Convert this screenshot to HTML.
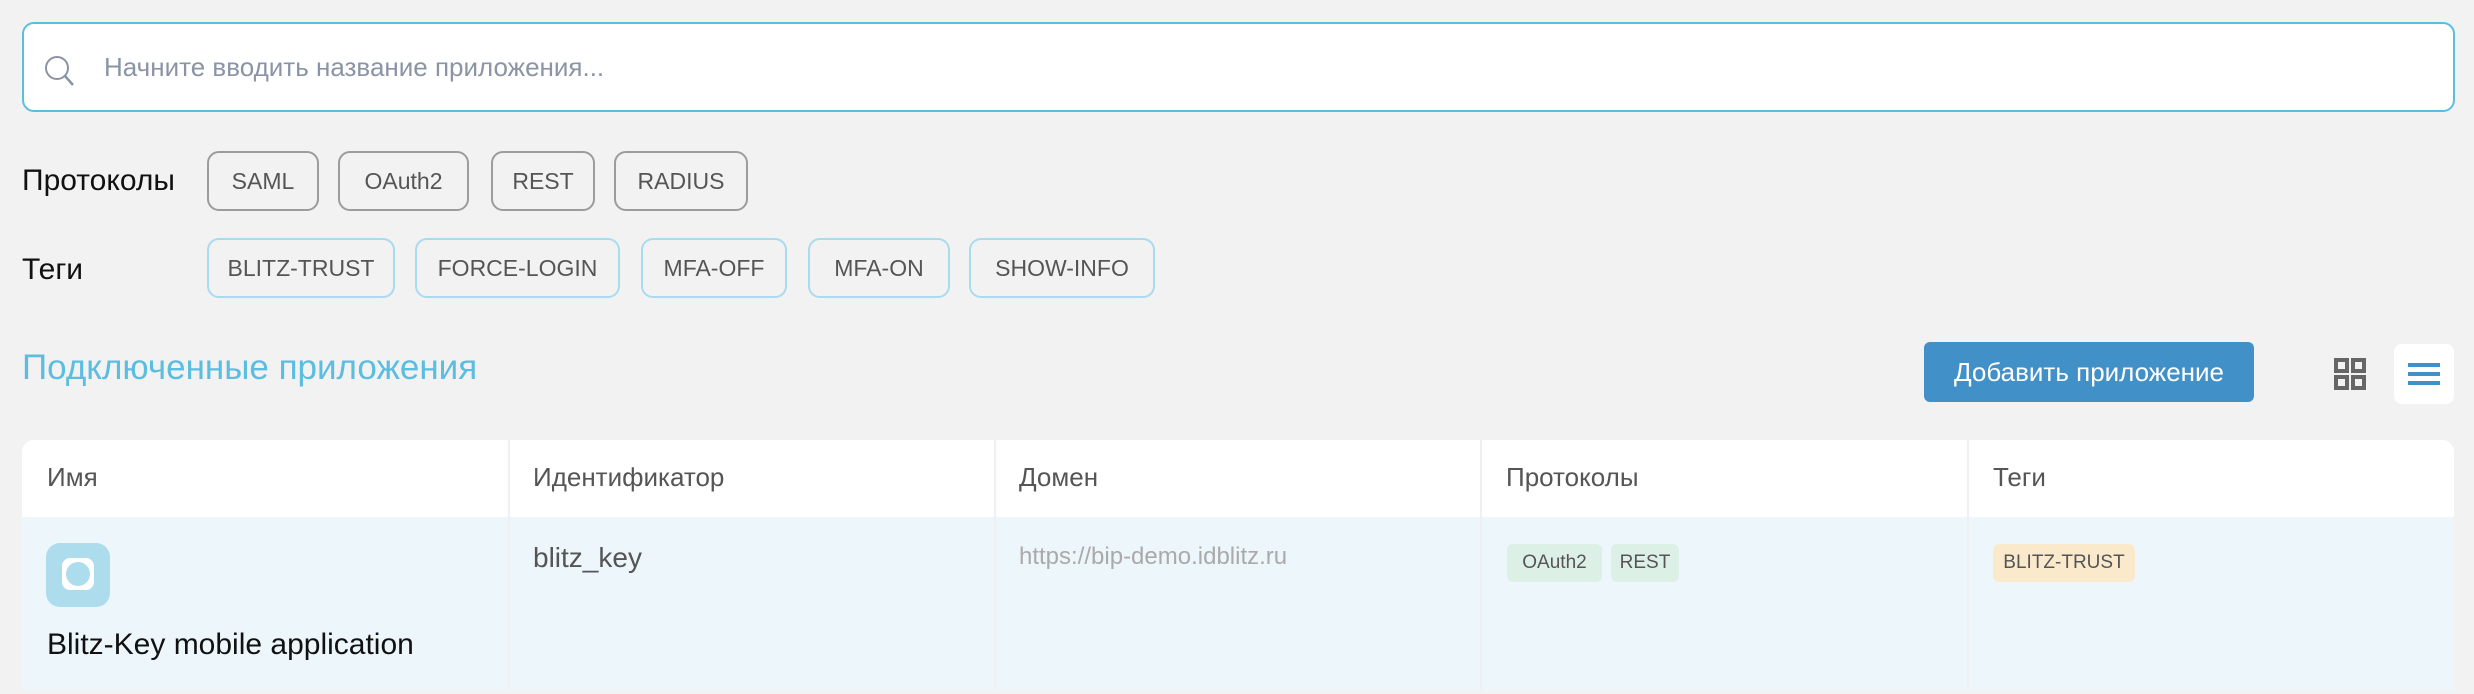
<!DOCTYPE html>
<html><head><meta charset="utf-8"><style>
*{box-sizing:border-box;margin:0;padding:0}
body{width:2474px;height:694px;background:#f2f2f2;font-family:"Liberation Sans",sans-serif;position:relative;overflow:hidden}
.a{position:absolute}
.search{left:22px;top:22px;width:2433px;height:90px;background:#fff;border:2px solid #5bbde0;border-radius:12px}
.ph{left:104px;top:50px;font-size:26px;color:#8a94a6;line-height:34px}
.lbl{font-size:30px;color:#111;line-height:34px}
.chip{height:60px;border:2px solid #9c9c9c;border-radius:12px;font-size:23px;color:#555;display:flex;align-items:center;justify-content:center}
.tag{border-color:#a9dbee}
.h{left:22px;top:348px;font-size:35px;color:#5bbde0;line-height:40px}
.btn{left:1924px;top:342px;width:330px;height:60px;background:#4290c8;border-radius:6px;color:#fff;font-size:26px;display:flex;align-items:center;justify-content:center}
.tbl{left:22px;top:440px;width:2432px;height:250px;background:#fff;border-radius:12px 12px 0 0;overflow:hidden}
.row{left:0;top:77px;width:2432px;height:173px;background:#edf6fb}
.vl{top:0;width:2px;height:250px;background:#eef0f2}
.th{top:461px;font-size:26px;color:#555;line-height:32px}
.pill{height:38px;border-radius:6px;font-size:19px;color:#555;display:flex;align-items:center;justify-content:center}
</style></head><body>
<div class="a search"></div>
<svg class="a" style="left:42px;top:53px" width="36" height="36" viewBox="0 0 36 36"><circle cx="15" cy="15" r="11" fill="none" stroke="#8a94a6" stroke-width="2"/><line x1="23" y1="23" x2="31" y2="32" stroke="#8a94a6" stroke-width="2.5"/></svg>
<div class="a ph">Начните вводить название приложения...</div>

<div class="a lbl" style="left:22px;top:164px">Протоколы</div>
<div class="a chip" style="left:207px;top:151px;width:112px">SAML</div>
<div class="a chip" style="left:338px;top:151px;width:131px">OAuth2</div>
<div class="a chip" style="left:491px;top:151px;width:104px">REST</div>
<div class="a chip" style="left:614px;top:151px;width:134px">RADIUS</div>

<div class="a lbl" style="left:22px;top:253px">Теги</div>
<div class="a chip tag" style="left:207px;top:238px;width:188px">BLITZ-TRUST</div>
<div class="a chip tag" style="left:415px;top:238px;width:205px">FORCE-LOGIN</div>
<div class="a chip tag" style="left:641px;top:238px;width:146px">MFA-OFF</div>
<div class="a chip tag" style="left:808px;top:238px;width:142px">MFA-ON</div>
<div class="a chip tag" style="left:969px;top:238px;width:186px">SHOW-INFO</div>

<div class="a h">Подключенные приложения</div>
<div class="a btn">Добавить приложение</div>
<svg class="a" style="left:2334px;top:358px" width="32" height="32" viewBox="0 0 32 32" fill="none" stroke="#666" stroke-width="4"><rect x="2" y="2" width="11" height="11"/><rect x="19" y="2" width="11" height="11"/><rect x="2" y="19" width="11" height="11"/><rect x="19" y="19" width="11" height="11"/></svg>
<div class="a" style="left:2394px;top:344px;width:60px;height:60px;background:#fff;border-radius:8px"></div>
<div class="a" style="left:2408px;top:363px;width:32px;height:4px;background:#4290c8"></div>
<div class="a" style="left:2408px;top:372px;width:32px;height:4px;background:#4290c8"></div>
<div class="a" style="left:2408px;top:381px;width:32px;height:4px;background:#4290c8"></div>

<div class="a tbl">
<div class="a row"></div>
<div class="a vl" style="left:486px"></div>
<div class="a vl" style="left:972px"></div>
<div class="a vl" style="left:1458px"></div>
<div class="a vl" style="left:1945px"></div>
</div>
<div class="a th" style="left:47px">Имя</div>
<div class="a th" style="left:533px">Идентификатор</div>
<div class="a th" style="left:1019px">Домен</div>
<div class="a th" style="left:1506px">Протоколы</div>
<div class="a th" style="left:1993px">Теги</div>

<div class="a" style="left:46px;top:543px;width:64px;height:64px;background:#addcec;border-radius:14px"></div>
<div class="a" style="left:62px;top:558px;width:32px;height:32px;background:#fff;border-radius:8px"></div>
<div class="a" style="left:66px;top:562px;width:24px;height:24px;background:#addcec;border-radius:50%"></div>
<div class="a" style="left:47px;top:628px;font-size:30px;color:#111;font-weight:500">Blitz-Key mobile application</div>
<div class="a" style="left:533px;top:542px;font-size:28px;color:#555">blitz_key</div>
<div class="a" style="left:1019px;top:543px;font-size:24px;color:#aaa">https://bip-demo.idblitz.ru</div>
<div class="a pill" style="left:1507px;top:544px;width:95px;background:#ddf0e6">OAuth2</div>
<div class="a pill" style="left:1611px;top:544px;width:68px;background:#ddf0e6">REST</div>
<div class="a pill" style="left:1993px;top:544px;width:142px;background:#fbe9cc">BLITZ-TRUST</div>
</body></html>
